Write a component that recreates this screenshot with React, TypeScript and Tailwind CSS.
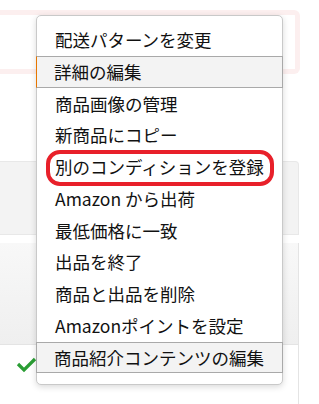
import React from 'react';

const items = [
  '配送パターンを変更',
  '詳細の編集',
  '商品画像の管理',
  '新商品にコピー',
  '別のコンディションを登録',
  'Amazon から出荷',
  '最低価格に一致',
  '出品を終了',
  '商品と出品を削除',
  'Amazonポイントを設定',
  '商品紹介コンテンツの編集',
];

const hovered: Record<number, 'orange' | 'gray'> = { 1: 'orange', 10: 'gray' };

const App: React.FC = () => {
  return (
    <div
      className="relative w-[319px] h-[404px] overflow-hidden bg-white"
      style={{ fontFamily: '"Noto Sans CJK JP", "Noto Sans", sans-serif' }}
    >
      {/* page behind the menu */}
      <div className="pt-[10px] flex flex-col">
        <div className="w-[300px] h-[64px] border-[5px] border-l-0 border-[#fcefef] rounded-r-[6px] bg-white" />
        <div className="h-[87px]" />
        <div className="w-[299px] h-[74px] bg-[#f3f3f3] border border-l-0 border-[#e8e8e8] rounded-tr-[4px]" />
        <div className="h-[8px]" />
        <div className="w-[299px] h-[102px] bg-gradient-to-b from-[#f8f8f8] to-[#efefef] border-r border-b border-[#e4e4e4]" />
        <div className="w-[299px] h-[60px] border-r border-[#e4e4e4] flex items-start pl-[16px] pt-[12px]">
          <svg width="22" height="16" viewBox="0 0 22 16">
            <polyline points="2,7 8,13 19,2" fill="none" stroke="#2a9d34" strokeWidth="3.2" />
          </svg>
        </div>
      </div>

      {/* dropdown menu */}
      <div className="absolute left-[36px] top-[15px] w-[247px] bg-white border border-[#c9c9c9] rounded-[5px] shadow-[0_2px_6px_rgba(0,0,0,0.15)] pt-[8px] pb-[11px]">
        {items.map((label, i) => {
          const h = hovered[i];
          return (
            <div
              key={label}
              className={`relative h-[31.75px] flex items-center text-[17.5px] leading-none text-[#111] whitespace-nowrap ${
                h
                  ? `bg-[#f3f3f3] border border-[#a9a9a9] pl-[17px] -mx-px ${h === 'orange' ? 'border-l-[#e77600]' : ''}`
                  : 'pl-[18px]'
              }`}
            >
              {label}
              {i === 4 && (
                <div className="absolute left-[9px] top-[-1px] w-[228px] h-[36px] border-4 border-[#e8202a] rounded-[14px]" />
              )}
            </div>
          );
        })}
      </div>
    </div>
  );
};

export default App;
